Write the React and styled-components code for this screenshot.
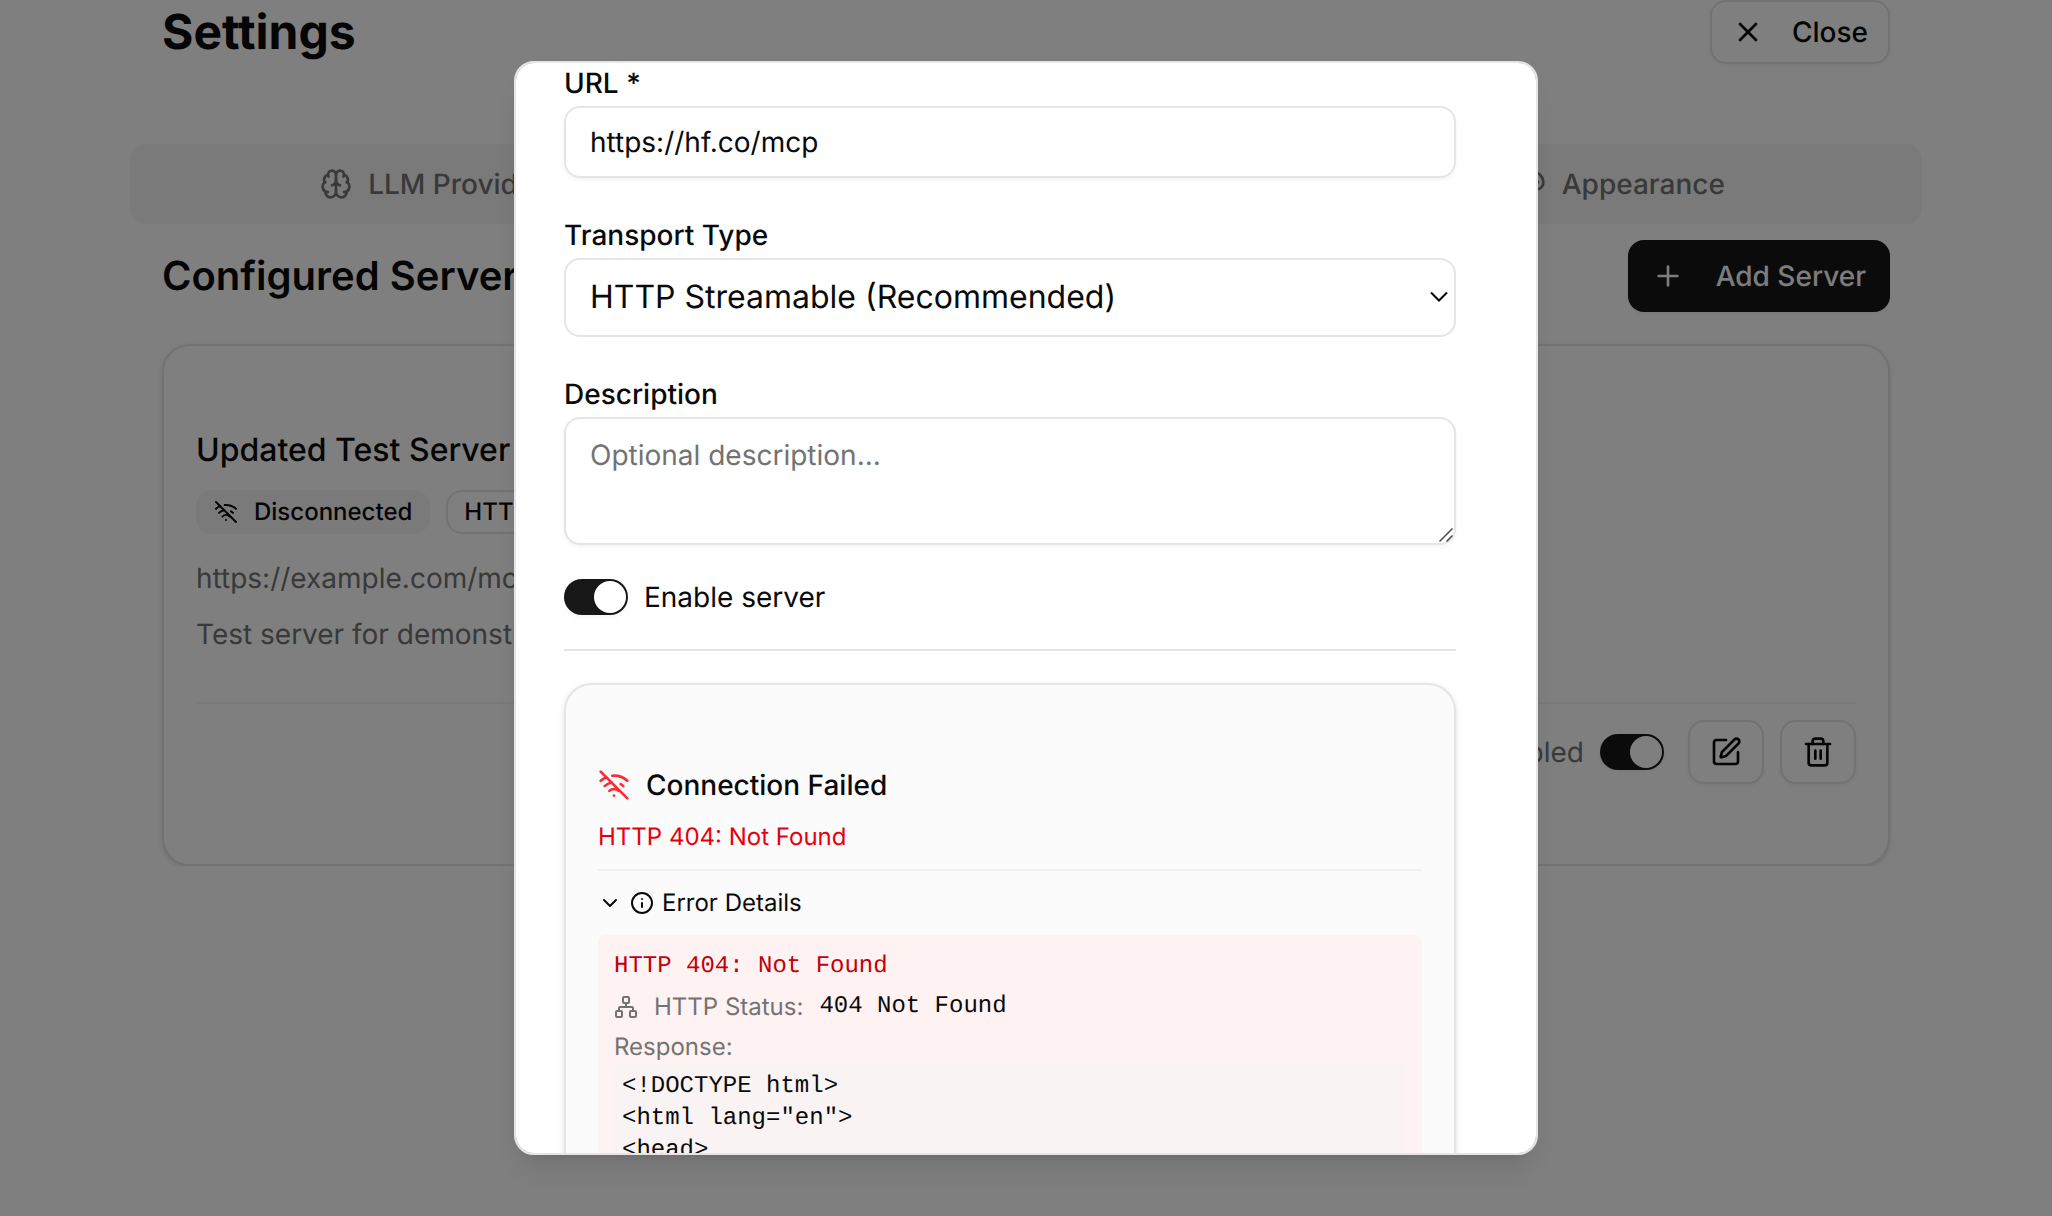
import React, { useLayoutEffect, useRef, useState } from "react";
import styled, { createGlobalStyle, css } from "styled-components";
import {
  Brain,
  ChevronDown,
  Info,
  Network,
  Palette,
  Plus,
  Server,
  SquarePen,
  Trash2,
  WifiOff,
  X,
} from "lucide-react";

const color = {
  background: "#ffffff",
  foreground: "#0a0a0a",
  primary: "#171717",
  primaryText: "#fafafa",
  muted: "#f5f5f5",
  mutedText: "#737373",
  border: "#e5e5e5",
  borderSoft: "#f2f2f2",
  panel: "#fbfbfb",
};

const GlobalStyle = createGlobalStyle`
  *, *::before, *::after { box-sizing: border-box; }
  html, body { margin: 0; }
  body {
    background: ${color.background};
    color: ${color.foreground};
    font-family: Inter, "Liberation Sans", sans-serif;
    font-size: 32px;
    line-height: 48px;
    text-rendering: geometricPrecision;
    overflow: hidden;
  }
  h1, h2, h3, p, pre { margin: 0; }
  button, input, select, textarea {
    font: inherit;
    color: inherit;
    text-rendering: inherit;
    margin: 0;
  }
  svg { flex-shrink: 0; display: block; }
`;

const small = css`
  font-size: 28px;
  line-height: 40px;
`;

const tiny = css`
  font-size: 24px;
  line-height: 32px;
`;

/* ---------- settings page ---------- */

const Page = styled.main`
  max-width: 1792px;
  margin: 0 auto;
`;

const PageHeader = styled.header`
  display: flex;
  align-items: center;
  justify-content: space-between;
  padding: 0 32px;
  margin-bottom: 80px;
`;

const PageTitle = styled.h1`
  font-size: 48px;
  line-height: 64px;
  font-weight: 700;
`;

const Button = styled.button`
  ${small}
  display: inline-flex;
  align-items: center;
  justify-content: center;
  gap: 28px;
  height: 64px;
  padding: 0 20px;
  font-weight: 500;
  border: 2px solid ${color.border};
  border-radius: 16px;
  background: ${color.background};
  box-shadow: 0 2px 4px rgba(0, 0, 0, 0.05);
  cursor: pointer;
`;

const PrimaryButton = styled(Button)`
  gap: 32px;
  height: 72px;
  padding: 0 24px;
  border: 0;
  background: ${color.primary};
  color: ${color.primaryText};
`;

const IconButton = styled(Button)`
  width: 76px;
  padding: 0;
`;

const TabList = styled.div`
  display: grid;
  grid-template-columns: repeat(3, 1fr);
  height: 80px;
  padding: 6px;
  border-radius: 16px;
  background: ${color.muted};
  margin-bottom: 16px;
`;

const Tab = styled.button`
  ${small}
  display: flex;
  align-items: center;
  justify-content: center;
  gap: 16px;
  padding: 0;
  border: 0;
  border-radius: 12px;
  font-weight: 500;
  background: ${(p) => (p.$active ? color.background : "transparent")};
  color: ${(p) => (p.$active ? color.foreground : color.mutedText)};
  cursor: pointer;
`;

const Section = styled.section`
  padding: 0 32px;
`;

const SectionHeader = styled.div`
  display: flex;
  align-items: center;
  justify-content: space-between;
  margin-bottom: 32px;
`;

const SectionTitle = styled.h2`
  font-size: 40px;
  line-height: 56px;
  font-weight: 600;
`;

const Card = styled.article`
  padding: 80px 32px;
  border: 2px solid ${color.border};
  border-radius: 28px;
  background: ${(p) => (p.$tinted ? color.panel : color.background)};
  box-shadow: 0 2px 6px rgba(0, 0, 0, 0.1), 0 2px 4px -2px rgba(0, 0, 0, 0.1);
`;

const ServerName = styled.h3`
  font-size: 32px;
  line-height: 48px;
  font-weight: 500;
  margin-bottom: 16px;
`;

const BadgeRow = styled.div`
  display: flex;
  gap: 16px;
  margin-bottom: 24px;
`;

const Badge = styled.span`
  ${tiny}
  display: inline-flex;
  align-items: center;
  gap: 16px;
  height: 44px;
  padding: 0 16px;
  font-weight: 500;
  border: 2px solid ${(p) => (p.$outline ? color.border : "transparent")};
  border-radius: 16px;
  background: ${(p) => (p.$outline ? "transparent" : color.muted)};
  background-clip: border-box;
`;

const MutedText = styled.p`
  ${small}
  color: ${color.mutedText};
  & + & {
    margin-top: 16px;
  }
`;

const CardFooter = styled.footer`
  display: flex;
  align-items: center;
  justify-content: flex-end;
  gap: 16px;
  margin-top: 48px;
  padding-top: 16px;
  border-top: 2px solid ${color.borderSoft};
`;

const SwitchRow = styled.label`
  ${small}
  display: flex;
  align-items: center;
  gap: 16px;
  color: ${(p) => (p.$muted ? color.mutedText : color.foreground)};
  margin-right: ${(p) => (p.$muted ? "8px" : "0")};
`;

const Switch = styled.input`
  appearance: none;
  display: flex;
  align-items: center;
  width: 64px;
  height: 36px;
  padding: 2px;
  border-radius: 18px;
  background: ${color.primary};
  box-shadow: 0 2px 4px rgba(0, 0, 0, 0.05);
  cursor: pointer;
  &::before {
    content: "";
    width: 32px;
    height: 32px;
    border-radius: 50%;
    background: ${color.background};
  }
  &:checked::before {
    margin-left: 28px;
  }
  &:not(:checked) {
    background: ${color.border};
  }
`;

/* ---------- dialog ---------- */

const Overlay = styled.div`
  position: fixed;
  inset: 0;
  display: flex;
  align-items: center;
  justify-content: center;
  background: rgba(0, 0, 0, 0.5);
`;

const Dialog = styled.div`
  width: 1024px;
  max-width: calc(100% - 64px);
  height: 90vh;
  overflow-y: auto;
  scrollbar-width: none;
  padding: 48px 80px 48px 48px;
  border: 2px solid ${color.border};
  border-radius: 20px;
  background: ${color.background};
  box-shadow: 0 20px 30px -6px rgba(0, 0, 0, 0.1),
    0 8px 12px -8px rgba(0, 0, 0, 0.1);
`;

const Form = styled.form`
  display: flex;
  flex-direction: column;
  gap: 32px;
`;

const Field = styled.div`
  label {
    font-size: 28px;
    line-height: 28px;
    font-weight: 500;
  }
`;

const controlFrame = css`
  display: block;
  width: 100%;
  border: 2px solid ${color.border};
  border-radius: 16px;
  background: transparent;
  outline: none;
`;

const TextInput = styled.input`
  ${controlFrame}
  ${small}
  height: 72px;
  padding: 0 24px;
  box-shadow: 0 2px 4px rgba(0, 0, 0, 0.05);
`;

const Layered = styled.div`
  display: grid;
  > * {
    grid-area: 1 / 1;
  }
  > svg {
    pointer-events: none;
    justify-self: end;
  }
`;

const Select = styled.select`
  ${controlFrame}
  appearance: none;
  height: 79px;
  padding: 0 24px;
`;

const SelectArrow = styled.svg`
  align-self: center;
  margin-right: 8px;
`;

const TextArea = styled.textarea`
  ${controlFrame}
  ${small}
  height: 128px;
  padding: 16px 24px;
  resize: none;
  box-shadow: 0 2px 4px rgba(0, 0, 0, 0.05);
  &::placeholder {
    color: ${color.mutedText};
    opacity: 1;
  }
`;

const ResizeGrip = styled.svg`
  align-self: end;
  margin: 0 3px 3px 0;
`;

const TestArea = styled.div`
  padding-top: 32px;
  border-top: 2px solid ${color.border};
`;

const StatusTitle = styled.h3`
  ${small}
  display: flex;
  align-items: center;
  gap: 16px;
  font-weight: 500;
  margin-bottom: 16px;
  svg {
    color: #fb2c36;
  }
`;

const StatusMessage = styled.p`
  ${tiny}
  color: #e7000b;
  margin-bottom: 16px;
`;

const Details = styled.div`
  padding-top: 16px;
  border-top: 2px solid ${color.borderSoft};
`;

const DetailsToggle = styled.button`
  ${tiny}
  display: flex;
  align-items: center;
  gap: 8px;
  padding: 0;
  border: 0;
  background: none;
  cursor: pointer;
  margin-bottom: 16px;
`;

const ErrorBox = styled.div`
  ${tiny}
  display: flex;
  flex-direction: column;
  gap: 8px;
  padding: 16px;
  border-radius: 8px;
  background: #fef2f2;
`;

const mono = css`
  font-family: "Liberation Mono", monospace;
`;

const ErrorLine = styled.p`
  ${mono}
  color: #c10007;
`;

const StatusRow = styled.div`
  display: flex;
  align-items: center;
  gap: 16px;
  color: ${color.mutedText};
`;

const StatusCode = styled.span`
  ${mono}
  color: ${color.foreground};
`;

const ResponseLabel = styled.p`
  color: ${color.mutedText};
`;

const ResponseBody = styled.pre`
  ${mono}
  padding: 8px;
  border-radius: 8px;
  background: #f9f3f3;
  overflow-x: auto;
`;

const RESPONSE = `<!DOCTYPE html>
<html lang="en">
<head>
<meta charset="utf-8">
</head>`;

function ServerCard() {
  return (
    <Card>
      <ServerName>Updated Test Server</ServerName>
      <BadgeRow>
        <Badge>
          <WifiOff size={24} />
          Disconnected
        </Badge>
        <Badge $outline>HTTP</Badge>
      </BadgeRow>
      <MutedText>https://example.com/mcp</MutedText>
      <MutedText>Test server for demonstration</MutedText>
      <CardFooter>
        <SwitchRow $muted>
          Enabled
          <Switch type="checkbox" role="switch" defaultChecked />
        </SwitchRow>
        <IconButton type="button" aria-label="Edit server">
          <SquarePen size={32} />
        </IconButton>
        <IconButton type="button" aria-label="Delete server">
          <Trash2 size={32} />
        </IconButton>
      </CardFooter>
    </Card>
  );
}

function ConnectionResult() {
  const [open, setOpen] = useState(true);
  return (
    <Card $tinted>
      <StatusTitle>
        <WifiOff size={32} />
        Connection Failed
      </StatusTitle>
      <StatusMessage>HTTP 404: Not Found</StatusMessage>
      <Details>
        <DetailsToggle
          type="button"
          aria-expanded={open}
          onClick={() => setOpen(!open)}
        >
          <ChevronDown size={24} />
          <Info size={24} />
          Error Details
        </DetailsToggle>
        {open && (
          <ErrorBox>
            <ErrorLine>HTTP 404: Not Found</ErrorLine>
            <StatusRow>
              <Network size={24} />
              <span>HTTP Status:</span>
              <StatusCode>404 Not Found</StatusCode>
            </StatusRow>
            <div>
              <ResponseLabel>Response:</ResponseLabel>
              <ResponseBody>{RESPONSE}</ResponseBody>
            </div>
          </ErrorBox>
        )}
      </Details>
    </Card>
  );
}

function ServerDialog() {
  const ref = useRef(null);

  // Open scrolled past the top padding, down to the first field.
  useLayoutEffect(() => {
    ref.current.scrollTop = 53;
  }, []);

  return (
    <Overlay>
      <Dialog ref={ref} role="dialog" aria-modal="true" aria-label="Server">
        <Form onSubmit={(e) => e.preventDefault()}>
          <Field>
            <label htmlFor="url">URL *</label>
            <TextInput id="url" type="text" defaultValue="https://hf.co/mcp" />
          </Field>
          <Field>
            <label htmlFor="transport">Transport Type</label>
            <Layered>
              <Select id="transport">
                <option>HTTP Streamable (Recommended)</option>
              </Select>
              <SelectArrow width="18" height="12" viewBox="0 0 18 12">
                <path
                  d="M1 1.5 9 9.5 17 1.5"
                  fill="none"
                  stroke={color.foreground}
                  strokeWidth="2"
                />
              </SelectArrow>
            </Layered>
          </Field>
          <Field>
            <label htmlFor="description">Description</label>
            <Layered>
              <TextArea id="description" placeholder="Optional description..." />
              <ResizeGrip width="14" height="14" viewBox="0 0 14 14">
                <path
                  d="M.5 13.5 13.5.5M7.5 13.5l6-6"
                  fill="none"
                  stroke="#4a4a4a"
                  strokeWidth="1.5"
                />
              </ResizeGrip>
            </Layered>
          </Field>
          <SwitchRow>
            <Switch type="checkbox" role="switch" defaultChecked />
            Enable server
          </SwitchRow>
          <TestArea>
            <ConnectionResult />
          </TestArea>
        </Form>
      </Dialog>
    </Overlay>
  );
}

export default function App() {
  return (
    <>
      <GlobalStyle />
      <Page>
        <PageHeader>
          <PageTitle>Settings</PageTitle>
          <Button type="button">
            <X size={32} />
            Close
          </Button>
        </PageHeader>
        <TabList role="tablist">
          <Tab type="button" role="tab">
            <Brain size={32} />
            LLM Provider
          </Tab>
          <Tab type="button" role="tab" aria-selected="true" $active>
            <Server size={32} />
            MCP Servers
          </Tab>
          <Tab type="button" role="tab">
            <Palette size={32} />
            Appearance
          </Tab>
        </TabList>
        <Section>
          <SectionHeader>
            <SectionTitle>Configured Servers</SectionTitle>
            <PrimaryButton type="button">
              <Plus size={32} />
              Add Server
            </PrimaryButton>
          </SectionHeader>
          <ServerCard />
        </Section>
      </Page>
      <ServerDialog />
    </>
  );
}
